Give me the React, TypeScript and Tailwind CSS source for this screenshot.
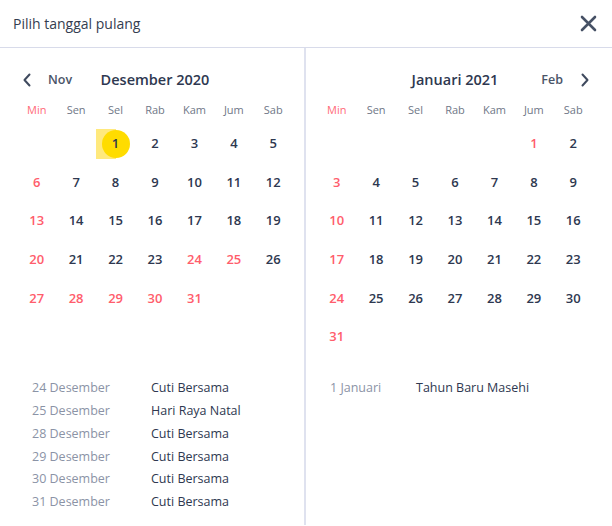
import React from 'react';

type Holiday = { date: string; name: string };

type MonthData = {
  title: string;
  startDay: number; // 0 = Min
  days: number;
  red: number[];
  holidays: Holiday[];
};

const weekDays = ['Min', 'Sen', 'Sel', 'Rab', 'Kam', 'Jum', 'Sab'];

const december: MonthData = {
  title: 'Desember 2020',
  startDay: 2,
  days: 31,
  red: [24, 25, 28, 29, 30, 31],
  holidays: [
    { date: '24 Desember', name: 'Cuti Bersama' },
    { date: '25 Desember', name: 'Hari Raya Natal' },
    { date: '28 Desember', name: 'Cuti Bersama' },
    { date: '29 Desember', name: 'Cuti Bersama' },
    { date: '30 Desember', name: 'Cuti Bersama' },
    { date: '31 Desember', name: 'Cuti Bersama' },
  ],
};

const january: MonthData = {
  title: 'Januari 2021',
  startDay: 5,
  days: 31,
  red: [1],
  holidays: [{ date: '1 Januari', name: 'Tahun Baru Masehi' }],
};

const Chevron = ({ dir }: { dir: 'left' | 'right' }) => (
  <svg width="10" height="14" viewBox="0 0 10 14" fill="none">
    <path
      d={dir === 'left' ? 'M7.5 1.5 L2.5 7 L7.5 12.5' : 'M2.5 1.5 L7.5 7 L2.5 12.5'}
      stroke="#3f4a5e"
      strokeWidth="2"
      strokeLinecap="round"
      strokeLinejoin="round"
    />
  </svg>
);

const MonthGrid = ({ month, selected }: { month: MonthData; selected?: number }) => {
  const cells: (number | null)[] = [];
  for (let i = 0; i < month.startDay; i++) cells.push(null);
  for (let d = 1; d <= month.days; d++) cells.push(d);

  return (
    <div className="w-[276px]">
      <div className="grid grid-cols-7 h-5 mt-[8px] items-center">
        {weekDays.map((w, i) => (
          <span
            key={w}
            className={`text-center text-[11px] ${i === 0 ? 'text-[#ff6b7a]' : 'text-[#6f7787]'}`}
          >
            {w}
          </span>
        ))}
      </div>
      {/* always room for six weeks */}
      <div className="grid grid-cols-7 auto-rows-[38.6px] h-[231.6px] mt-[4.7px]">
        {cells.map((d, i) => {
          if (d === null) return <div key={i} />;
          const isRed = i % 7 === 0 || month.red.includes(d);
          const isSel = d === selected;
          return (
            <div key={i} className="relative flex items-center justify-center">
              {isSel && (
                <>
                  <div className="absolute left-0 top-[4.5px] w-1/2 h-[30px] bg-[#ffe97d]" />
                  <div className="absolute w-[28px] h-[28px] rounded-full bg-[#ffdc00]" />
                </>
              )}
              <span
                className={`relative text-[13px] font-semibold ${isRed ? 'text-[#ff5d6c]' : 'text-[#2e3850]'}`}
              >
                {d}
              </span>
            </div>
          );
        })}
      </div>
    </div>
  );
};

const HolidayList = ({ items, dateWidth }: { items: Holiday[]; dateWidth: string }) => (
  <div className="mt-[21px] text-[12.5px] leading-[22.8px]">
    {items.map((h) => (
      <div key={h.date} className="flex">
        <span className={`${dateWidth} text-[#8b93a6]`}>{h.date}</span>
        <span className="text-[#2e3850]">{h.name}</span>
      </div>
    ))}
  </div>
);

export default function App() {
  return (
    <div
      className="w-[612px] h-[526px] bg-white overflow-hidden"
      style={{ fontFamily: '"Open Sans", "Noto Sans", sans-serif' }}
    >
      {/* Header */}
      <div className="h-[48px] flex items-center justify-between pl-[13px] pr-[15px] border-b border-[#d8dbea]">
        <span className="text-[14px] text-[#343d50]">Pilih tanggal pulang</span>
        <svg width="17" height="17" viewBox="0 0 17 17" fill="none">
          <path d="M2 2 L15 15 M15 2 L2 15" stroke="#465165" strokeWidth="2.6" strokeLinecap="round" />
        </svg>
      </div>

      <div className="flex h-[477px]">
        {/* Left month */}
        <div className="w-[306px] border-r-2 border-[#dfe2ef] pl-[17px]">
          <div className="w-[276px] h-6 mt-[20px] grid grid-cols-[1fr_auto_1fr] items-center">
            <div className="flex items-center pl-[5px] gap-[16px]">
              <Chevron dir="left" />
              <span className="text-[12.5px] font-semibold text-[#4a5468]">Nov</span>
            </div>
            <span className="text-[14.5px] font-semibold text-[#2e3850]">{december.title}</span>
            <div />
          </div>
          <MonthGrid month={december} selected={1} />
          <div className="pl-[15px]">
            <HolidayList items={december.holidays} dateWidth="w-[119px]" />
          </div>
        </div>

        {/* Right month */}
        <div className="flex-1 pl-[11px]">
          <div className="w-[276px] h-6 mt-[20px] grid grid-cols-[1fr_auto_1fr] items-center">
            <div />
            <span className="text-[14.5px] font-semibold text-[#2e3850]">{january.title}</span>
            <div className="flex items-center justify-end pr-[3px] gap-[17px]">
              <span className="text-[12.5px] font-semibold text-[#4a5468]">Feb</span>
              <Chevron dir="right" />
            </div>
          </div>
          <MonthGrid month={january} />
          <div className="pl-[13px]">
            <HolidayList items={january.holidays} dateWidth="w-[86px]" />
          </div>
        </div>
      </div>
    </div>
  );
}
